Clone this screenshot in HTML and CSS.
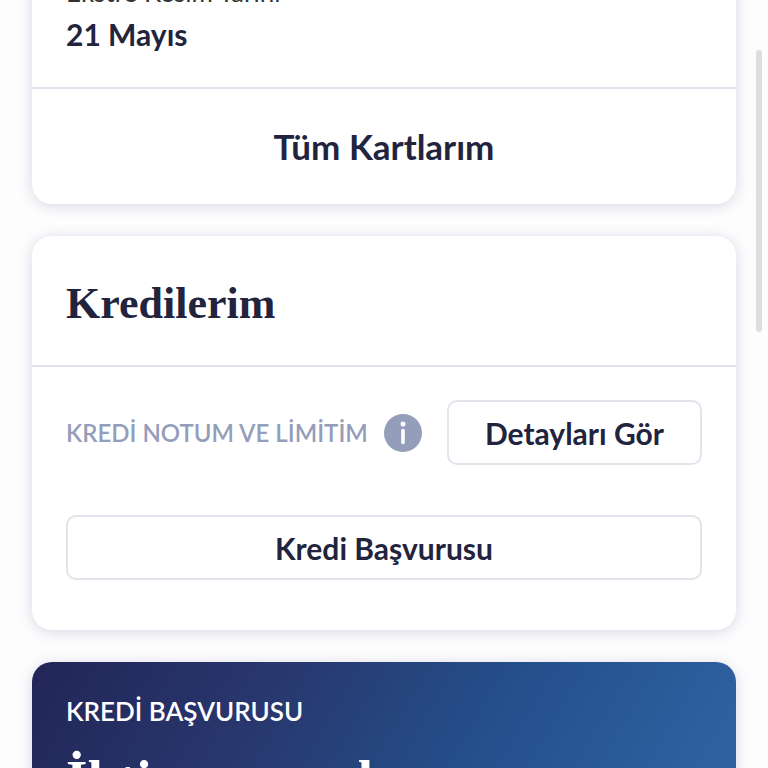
FILE: index.html
```html
<!DOCTYPE html>
<html lang="tr">
<head>
    <meta charset="UTF-8">
    <title>Kredilerim</title>
    <meta name="viewport" content="width=device-width, initial-scale=1">
    <link rel="stylesheet" href="styles.css">
</head>
<body>
<main class="feed">
    <section class="card card-first">
        <dl class="statement">
            <dt>Ekstre Kesim Tarihi</dt>
            <dd>21 Mayıs</dd>
        </dl>
        <a class="card-link" href="#kartlar">Tüm Kartlarım</a>
    </section>

    <section class="card">
        <h2 class="card-title">Kredilerim</h2>
        <div class="card-body">
            <div class="score-row">
                <span class="score-label">KREDİ NOTUM VE LİMİTİM</span>
                <button type="button" class="info" aria-label="Bilgi">
                    <svg viewBox="0 0 38 38" width="38" height="38">
                        <circle cx="19" cy="19" r="19" fill="#949dba"/>
                        <circle cx="19" cy="10" r="2.5" fill="#fff"/>
                        <path d="M19 16.5v12" stroke="#fff" stroke-width="3.6" stroke-linecap="round"/>
                    </svg>
                </button>
                <button type="button" class="btn btn-details">Detayları Gör</button>
            </div>
            <button type="button" class="btn">Kredi Başvurusu</button>
        </div>
    </section>

    <section class="card promo">
        <p class="promo-label">KREDİ BAŞVURUSU</p>
        <h2 class="promo-title">İhtiyacınız olan</h2>
    </section>
</main>
<div class="scroll-thumb"></div>
</body>
</html>
```
FILE: styles.css
```css
* {
    box-sizing: border-box;
}
html {
    height: 100%;
    overflow: hidden;
}
body {
    height: 100%;
    margin: 0;
    overflow: hidden;
    background: #fdfdfe;
    color: #22243e;
    font-family: Lato, "Open Sans", sans-serif;
}
.feed {
    display: flex;
    flex-direction: column;
    gap: 32px;
    padding: 0 32px;
}
.card {
    background: #fff;
    border-radius: 20px;
    box-shadow: 0 2px 14px rgba(60, 60, 120, 0.2);
}
/* the feed is scrolled past the top of this card */
.card-first {
    margin-top: -60px;
}
.statement {
    margin: 0;
    padding: 36px 34px 34px;
    border-bottom: 2px solid #e0e1ed;
}
.statement dt {
    color: #333;
    font-size: 26px;
    line-height: 32px;
}
.statement dd {
    margin: 0;
    padding-top: 8px;
    font-size: 30px;
    font-weight: 700;
    line-height: 37px;
}
.card-link {
    display: block;
    padding: 36px 34px;
    color: inherit;
    font-size: 35px;
    font-weight: 700;
    line-height: 43px;
    text-align: center;
    text-decoration: none;
}
.card-title {
    margin: 0;
    padding: 43px 34px 36px;
    border-bottom: 2px solid #e0e1ed;
    font-family: "Liberation Serif", serif;
    font-size: 44px;
    line-height: 50px;
}
.card-body {
    display: flex;
    flex-direction: column;
    gap: 50px;
    padding: 33px 34px 50px;
}
.score-row {
    display: flex;
    align-items: center;
}
.score-label {
    color: #949dba;
    font-size: 24px;
    font-weight: 600;
}
.info {
    display: flex;
    margin-left: 16px;
    padding: 0;
    border: none;
    background: none;
    cursor: pointer;
}
.btn {
    height: 65px;
    border: 2px solid #e2e4ec;
    border-radius: 10px;
    background: #fff;
    color: inherit;
    font-family: inherit;
    font-size: 30px;
    font-weight: 700;
    cursor: pointer;
}
.btn-details {
    margin-left: auto;
    padding: 0 36px;
}
.promo {
    padding: 32px 34px;
    background: linear-gradient(120deg, #222557 0%, #28386e 32%, #24508c 62%, #3265a6 100%);
    color: #fff;
}
.promo-label {
    margin: 0;
    font-size: 26px;
    font-weight: 600;
    line-height: 34px;
}
.promo-title {
    margin: 22px 0 0;
    font-family: "Liberation Serif", serif;
    font-size: 55px;
    line-height: 60px;
}
.scroll-thumb {
    position: fixed;
    top: 50px;
    right: 6px;
    width: 6px;
    height: 282px;
    border-radius: 3px;
    background: #dedede;
}
```
